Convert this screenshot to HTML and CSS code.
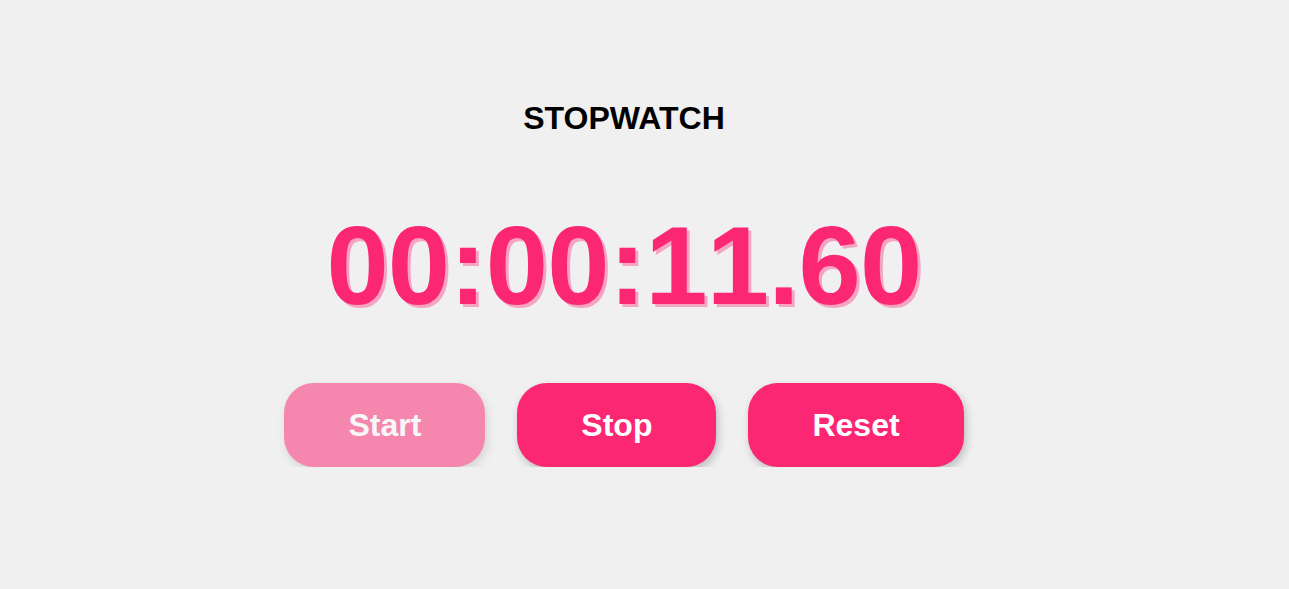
FILE: index.html
```html
<!DOCTYPE html>
<html lang="en">
<head>
<meta charset="utf-8">
<title>Stopwatch</title>
<link rel="stylesheet" href="styles.css">
</head>
<body>
<main class="stopwatch">
  <h1 class="title">STOPWATCH</h1>
  <div class="time">00:00:11.60</div>
  <div class="controls">
    <button class="btn" disabled>Start</button>
    <button class="btn">Stop</button>
    <button class="btn">Reset</button>
  </div>
</main>
</body>
</html>
```
FILE: styles.css
```css
html, body {
  margin: 0;
  padding: 0;
  background: #f0f0f0;
  font-family: "Liberation Sans", Arial, sans-serif;
}

.stopwatch {
  display: flex;
  flex-direction: column;
  align-items: center;
  padding: 100px 41px 0 0;
}

.title {
  margin: 0;
  font-size: 32px;
  font-weight: 700;
  color: #000;
  line-height: 37px;
}

.time {
  margin-top: 64px;
  font-size: 112px;
  font-weight: 700;
  color: #fb2772;
  line-height: 129px;
  letter-spacing: -0.8px;
  font-kerning: none;
  font-feature-settings: "kern" 0;
  text-shadow: 3px 3px 0 #f5a4c1;
}

.controls {
  display: flex;
  gap: 32px;
  margin-top: 53px;
}

.btn {
  font-family: "Liberation Sans", Arial, sans-serif;
  font-size: 32px;
  font-weight: 700;
  color: #fff;
  background: #fb2772;
  border: none;
  border-radius: 30px;
  height: 84px;
  padding: 0 64px;
  line-height: 84px;
  box-shadow: 2px 4px 8px rgba(0, 0, 0, 0.22);
  cursor: pointer;
}

.btn:disabled {
  opacity: 0.52;
  cursor: default;
}
```
